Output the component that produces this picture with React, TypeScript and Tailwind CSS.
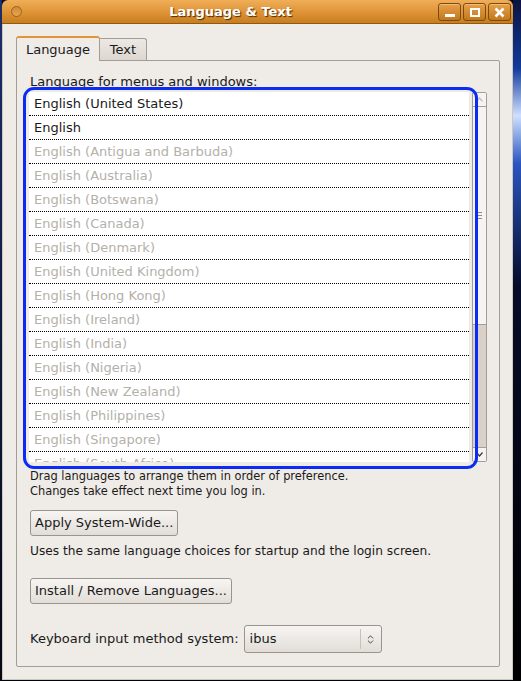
import { ChevronsUpDown } from "lucide-react"

const languages = [
  { name: "English (United States)", active: true },
  { name: "English", active: true },
  { name: "English (Antigua and Barbuda)", active: false },
  { name: "English (Australia)", active: false },
  { name: "English (Botswana)", active: false },
  { name: "English (Canada)", active: false },
  { name: "English (Denmark)", active: false },
  { name: "English (United Kingdom)", active: false },
  { name: "English (Hong Kong)", active: false },
  { name: "English (Ireland)", active: false },
  { name: "English (India)", active: false },
  { name: "English (Nigeria)", active: false },
  { name: "English (New Zealand)", active: false },
  { name: "English (Philippines)", active: false },
  { name: "English (Singapore)", active: false },
  { name: "English (South Africa)", active: false },
]

function TitleButton({ children }: { children: React.ReactNode }) {
  return (
    <div className="w-[23px] h-[18px] rounded-[3px] border border-[#7a4a10] bg-linear-to-b from-[#e7a04a] to-[#c27818] flex items-center justify-center shadow-[inset_0_1px_0_#f3bd74]">
      {children}
    </div>
  )
}

function GtkButton({ label }: { label: string }) {
  return (
    <div className="self-start h-[26px] px-[4px] rounded-[3px] border border-[#9a948d] bg-linear-to-b from-[#f7f5f3] to-[#e2ddd7] flex items-center text-[13px] text-[#1a1a1a]">
      {label}
    </div>
  )
}

export default function App() {
  return (
    <div className="relative w-[521px] h-[681px] overflow-hidden flex bg-[#02040c] font-['DejaVu_Sans',sans-serif]">
      <div className="w-[2px] bg-linear-to-b from-[#1b2f6e] to-[#050814]" />

      <div className="w-[511px] h-[680px] flex flex-col">
        {/* title bar */}
        <div className="relative h-[24px] rounded-t-[6px] bg-linear-to-b from-[#f0ae58] via-[#e09538] to-[#c87d1e] border-b border-[#8d5a16] flex items-center justify-center pr-[54px]">
          <div className="absolute left-[9px] top-[6px] w-[11px] h-[11px] rounded-full border border-[#9b6321] bg-linear-to-b from-[#d08a33] to-[#e7a552]" />
          <span className="text-white font-bold text-[13px] [text-shadow:1px_1px_1px_#4a2a00]">
            Language &amp; Text
          </span>
          <div className="absolute right-[2px] top-[3px] flex gap-[2px]">
            <TitleButton>
              <div className="w-[10px] h-[3px] bg-white mt-[6px]" />
            </TitleButton>
            <TitleButton>
              <div className="w-[10px] h-[9px] border-2 border-white" />
            </TitleButton>
            <TitleButton>
              <svg width="11" height="11" viewBox="0 0 11 11">
                <path d="M1.5 1.5 L9.5 9.5 M9.5 1.5 L1.5 9.5" stroke="white" strokeWidth="2.6" />
              </svg>
            </TitleButton>
          </div>
        </div>

        {/* body */}
        <div className="flex-1 bg-[#efebe7] border-x border-b border-[#cfc8bf] pt-[12px] pl-[13px] pr-[12px] pb-[12px] flex flex-col">
          {/* tabs */}
          <div className="flex items-end">
            <div className="relative z-10 -mb-px h-[25px] w-[84px] rounded-t-[3px] border-x border-t-2 border-x-[#a39d96] border-t-[#e3933a] bg-[#efebe7] flex items-center justify-center text-[13px] text-[#1a1a1a]">
              Language
            </div>
            <div className="h-[22px] w-[47px] rounded-tr-[3px] border-t border-r border-[#a39d96] bg-linear-to-b from-[#ece8e3] to-[#ddd7d0] flex items-center justify-center text-[13px] text-[#1a1a1a]">
              Text
            </div>
          </div>

          {/* pane */}
          <div className="flex-1 border border-[#a39d96] rounded-b-[2px] rounded-tr-[2px] pt-[13px] pl-[13px] pr-[12px] pb-[13px] flex flex-col text-[13px] text-[#1a1a1a]">
            <div className="leading-[16px]">Language for menus and windows:</div>

            <div className="mt-[2px] h-[370px] flex -ml-[1px]">
              <div className="flex-1 bg-white overflow-hidden">
                {languages.map((l) => (
                  <div
                    key={l.name}
                    className={`h-[24px] shrink-0 pl-[5px] flex items-center border-b border-dotted border-black ${l.active ? "text-[#1a1a1a]" : "text-[#b4b0aa]"}`}
                  >
                    {l.name}
                  </div>
                ))}
              </div>
              {/* scrollbar */}
              <div className="ml-[3px] w-[15px] flex flex-col border border-[#a39d96] rounded-[2px] bg-[#d9d1c9]">
                <div className="h-[14px] bg-[#f6f4f2] border-b border-[#a39d96] flex items-center justify-center">
                  <svg width="7" height="5" viewBox="0 0 7 5">
                    <path d="M0.5 4.5 L3.5 1 L6.5 4.5" stroke="#c4beb7" strokeWidth="1.2" fill="none" />
                  </svg>
                </div>
                <div className="h-[218px] bg-[#f6f4f2] border-b border-[#a39d96] flex flex-col items-center justify-center gap-[2px]">
                  <div className="w-[5px] h-px bg-[#8f8a84]" />
                  <div className="w-[5px] h-px bg-[#8f8a84]" />
                  <div className="w-[5px] h-px bg-[#8f8a84]" />
                </div>
                <div className="flex-1" />
                <div className="h-[14px] bg-[#f6f4f2] border-t border-[#a39d96] flex items-center justify-center">
                  <svg width="7" height="5" viewBox="0 0 7 5">
                    <path d="M0.5 0.5 L3.5 4 L6.5 0.5" stroke="#3a3a3a" strokeWidth="1.2" fill="none" />
                  </svg>
                </div>
              </div>
            </div>

            <div className="mt-[7px] leading-[15px] text-[11.4px]">
              <div>Drag languages to arrange them in order of preference.</div>
              <div>Changes take effect next time you log in.</div>
            </div>

            <div className="mt-[11px] flex flex-col">
              <GtkButton label="Apply System-Wide..." />
            </div>

            <div className="mt-[8px] leading-[15px] text-[12.2px]">
              Uses the same language choices for startup and the login screen.
            </div>

            <div className="mt-[19px] flex flex-col">
              <GtkButton label="Install / Remove Languages..." />
            </div>

            <div className="mt-[21px] flex items-center">
              <span>Keyboard input method system:</span>
              <div className="ml-[5px] w-[138px] h-[28px] rounded-[3px] border border-[#9a948d] bg-linear-to-b from-[#f7f5f3] to-[#e2ddd7] flex items-center">
                <span className="flex-1 pl-[5px]">ibus</span>
                <div className="w-px h-[20px] bg-[#c9c2ba]" />
                <div className="w-[20px] flex items-center justify-center">
                  <ChevronsUpDown size={11} strokeWidth={2} className="text-[#3a3a3a]" />
                </div>
              </div>
            </div>
          </div>
        </div>
      </div>

      <div className="flex-1 bg-[linear-gradient(to_bottom,#0a1440_0%,#123a9a_10%,#cfe0ff_17%,#2a55c0_24%,#060c28_42%,#000_100%)]" />

      {/* annotation highlight */}
      <div className="absolute left-[23px] top-[87px] w-[455px] h-[382px] rounded-[11px] border-[3px] border-[#0a2cf5] pointer-events-none" />
    </div>
  )
}
